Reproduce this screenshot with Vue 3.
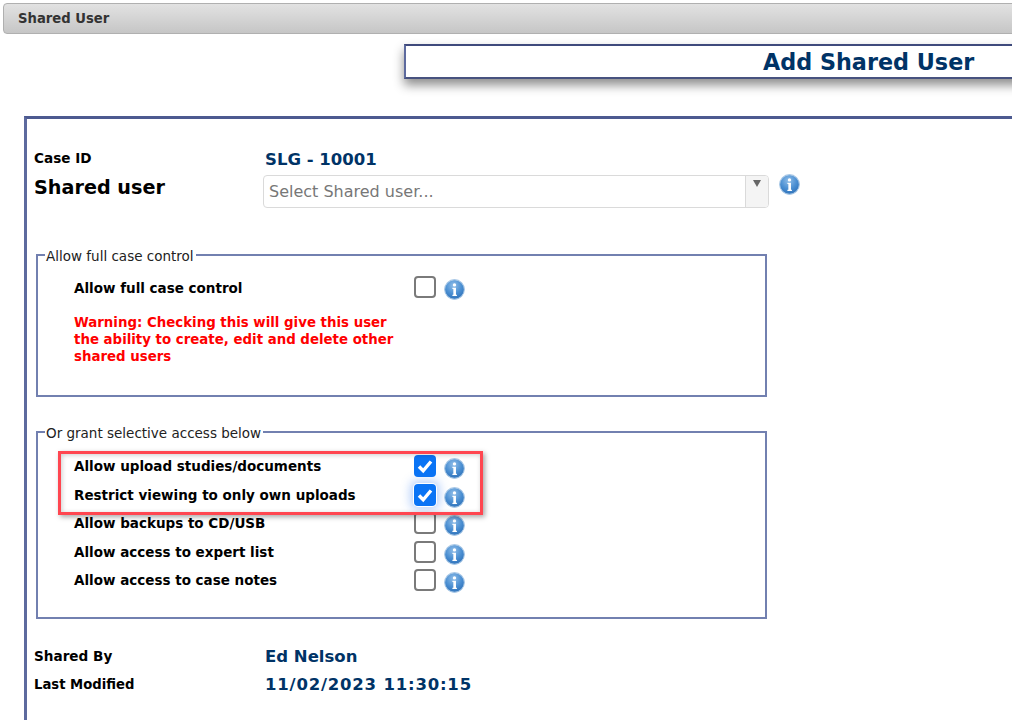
<script setup>
const fullRows = [{ label: 'Allow full case control', checked: false }]
const rows = [
  { label: 'Allow upload studies/documents', checked: true },
  { label: 'Restrict viewing to only own uploads', checked: true, focus: true },
  { label: 'Allow backups to CD/USB', checked: false },
  { label: 'Allow access to expert list', checked: false },
  { label: 'Allow access to case notes', checked: false }
]
</script>

<template>
  <div class="page">
    <svg width="0" height="0" class="defs">
      <defs>
        <radialGradient id="infoFill" cx="45%" cy="30%" r="75%">
          <stop offset="0" stop-color="#8fbde8" />
          <stop offset="0.55" stop-color="#4b8fd2" />
          <stop offset="1" stop-color="#2a6db5" />
        </radialGradient>
        <symbol id="info" viewBox="0 0 20 20">
          <circle cx="10" cy="10" r="9.4" fill="url(#infoFill)" stroke="#a9c8e6" stroke-width="1" />
          <circle cx="10" cy="5.6" r="1.6" fill="#fff" />
          <path d="M8 8.3h3.4v6.6h.9v1.3H8v-1.3h.9v-5.3H8z" fill="#fff" />
        </symbol>
      </defs>
    </svg>

    <div class="topbar">Shared User</div>
    <div class="title"><h1>Add Shared User</h1></div>

    <section class="panel">
      <div class="line case">
        <span class="label case-label">Case ID</span>
        <span class="value">SLG - 10001</span>
      </div>
      <div class="line user">
        <span class="label big">Shared user</span>
        <div class="select">
          <span class="placeholder">Select Shared user...</span>
          <span class="arrow"><i></i></span>
        </div>
        <svg class="info select-info"><use href="#info" /></svg>
      </div>

      <fieldset class="group first">
        <legend>Allow full case control</legend>
        <div v-for="r in fullRows" :key="r.label" class="row">
          <span class="row-label">{{ r.label }}</span>
          <span class="box"></span>
          <svg class="info"><use href="#info" /></svg>
        </div>
        <p class="warn">Warning: Checking this will give this user the ability to create, edit and delete other shared users</p>
      </fieldset>

      <fieldset class="group second">
        <legend>Or grant selective access below</legend>
        <div v-for="r in rows" :key="r.label" class="row">
          <span class="row-label">{{ r.label }}</span>
          <span class="box" :class="{ on: r.checked, focus: r.focus }">
            <svg v-if="r.checked" viewBox="0 0 22 22"><path d="M5 11.5l4.2 4.3L17 6.5" fill="none" stroke="#fff" stroke-width="3.4" /></svg>
          </span>
          <svg class="info"><use href="#info" /></svg>
        </div>
        <div class="highlight"></div>
      </fieldset>

      <div class="line by">
        <span class="label by-label">Shared By</span>
        <span class="value">Ed Nelson</span>
      </div>
      <div class="line mod">
        <span class="label">Last Modified</span>
        <span class="value date">11/02/2023 11:30:15</span>
      </div>
    </section>
  </div>
</template>

<style>
html, body { margin: 0; background: #fff; overflow: hidden; }
</style>

<style scoped>
.page {
  width: 1012px;
  height: 720px;
  overflow: hidden;
  padding-top: 3px;
  box-sizing: border-box;
  font-family: "DejaVu Sans", Verdana, sans-serif;
  background: #fff;
  color: #000;
}
.defs { position: absolute; }
.topbar {
  margin-left: 3px;
  width: 1040px;
  height: 31px;
  box-sizing: border-box;
  border: 1px solid #b0b0b0;
  border-radius: 4px;
  background: linear-gradient(#e2e2e2, #c6c6c6);
  font-size: 13.2px;
  font-weight: 700;
  line-height: 30px;
  padding-left: 14px;
  color: #333;
}
.title {
  margin: 10px 0 0 404px;
  width: 700px;
  height: 35px;
  box-sizing: border-box;
  border: 2px solid #5d6a9e;
  border-color: #3f4a7c #5d6a9e #47527f #5d6a9e;
  box-shadow: 0 6px 10px rgba(0, 0, 0, 0.45);
  padding-left: 357px;
}
.title h1 {
  margin: 0;
  font-size: 22.3px;
  line-height: 33px;
  font-weight: 700;
  color: #003366;
  white-space: nowrap;
}
.panel {
  margin: 37px 0 0 24px;
  width: 1100px;
  height: 700px;
  box-sizing: border-box;
  border: 3px solid #5d6a9e;
  border-top-color: #4d5a90;
  padding: 28px 0 0 7px;
}
.line { display: flex; align-items: center; }
.label {
  width: 231px;
  flex: none;
  font-size: 13.2px;
  font-weight: 700;
}
.case-label { font-size: 13.6px; margin-top: -2px; }
.by-label { font-size: 13.6px; }
.value {
  font-size: 16.5px;
  font-weight: 700;
  color: #003366;
}
.date { letter-spacing: 0.8px; }
.case { height: 24px; }
.user { height: 34px; margin-top: 4px; align-items: flex-start; }
.label.big {
  width: 229px;
  font-size: 19.2px;
  line-height: 24px;
  padding-top: 1px;
}
.select {
  width: 506px;
  height: 33px;
  box-sizing: border-box;
  border: 1px solid #dadada;
  border-radius: 4px;
  display: flex;
  justify-content: space-between;
  overflow: hidden;
}
.placeholder {
  font-size: 16px;
  line-height: 31px;
  padding-left: 5px;
  color: #777;
}
.arrow {
  width: 23px;
  border-left: 1px solid #dadada;
  background: #f4f4f4;
  display: flex;
  justify-content: center;
  padding-top: 4px;
  box-sizing: border-box;
}
.arrow i {
  width: 0;
  height: 0;
  border-left: 4px solid transparent;
  border-right: 4px solid transparent;
  border-top: 7px solid #666;
}
.info {
  width: 21px;
  height: 21px;
  flex: none;
}
.select-info { margin: -1px 0 0 10px; }
.group {
  position: relative;
  margin: 0;
  width: 731px;
  box-sizing: border-box;
  border: 2px solid #7280b0;
  padding: 0 0 0 36px;
  min-width: 0;
}
.group legend {
  margin-left: -29px;
  padding: 2px 2px 0 1px;
  font-size: 13.5px;
  line-height: 16px;
  color: #222;
}
.first { margin: 37px 0 0 2px; height: 151px; padding-top: 11px; }
.second { margin: 26px 0 0 2px; height: 196px; padding-top: 13px; }
.second .row-label { margin-top: 2px; }
.row {
  display: flex;
  align-items: flex-start;
  height: 28.6px;
}
.row-label {
  width: 340px;
  flex: none;
  font-size: 13.5px;
  line-height: 20px;
  font-weight: 700;
  margin-top: 3px;
}
.box {
  width: 22px;
  height: 22px;
  flex: none;
  box-sizing: border-box;
  border: 2px solid #7a7a7a;
  border-radius: 4px;
  background: #fff;
  margin-top: 1px;
}
.box svg { display: block; width: 22px; height: 22px; }
.box.on {
  background: #0a74f5;
  border: 0;
}
.box.focus { box-shadow: 0 0 0 1px #fff, 0 0 10px 4px rgba(60, 130, 240, 0.35); }
.row .info { margin: 4px 0 0 8px; }
.warn {
  margin: 10px 0 0;
  width: 330px;
  font-size: 13.35px;
  line-height: 17px;
  font-weight: 700;
  color: #ff0000;
}
.highlight {
  position: absolute;
  left: 20px;
  top: 10px;
  width: 425px;
  height: 64px;
  box-sizing: border-box;
  border: 3px solid #ff4650;
  box-shadow: 2px 2px 5px rgba(0, 0, 0, 0.35), inset 1px 1px 5px rgba(0, 0, 0, 0.2);
  background: transparent;
}
.by { margin-top: 24px; height: 26px; }
.mod { height: 30px; }
</style>
